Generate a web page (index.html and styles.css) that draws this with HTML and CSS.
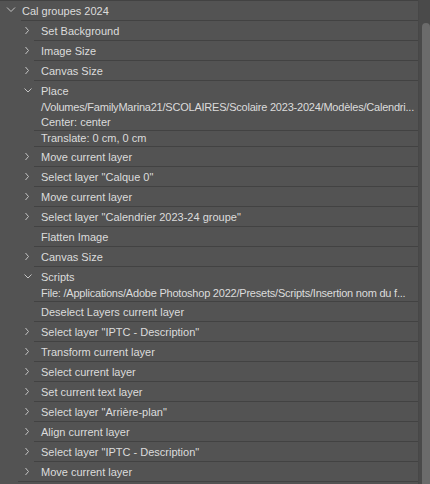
FILE: index.html
```
<!DOCTYPE html>
<html>
<head>
<meta charset="utf-8">
<link rel="stylesheet" href="styles.css">
</head>
<body>
<div class="panel">
  <div class="list">
    <div class="topline"></div>
    <div class="set">
      <div class="row head">
        <div class="gutter g-head"><svg width="21" height="19" viewBox="0 0 21 19"><path d="M7 6.5 L11 10.5 L15 6.5" /></svg></div>
        <div class="body"><div class="line title">Cal groupes 2024</div></div>
      </div>
      <div class="children">
        <div class="row"><div class="gutter"><svg width="16" height="19" viewBox="0 0 16 19"><path d="M7.5 6 L10.5 9.5 L7.5 13" /></svg></div><div class="body"><div class="line title">Set Background</div></div></div>
        <div class="row"><div class="gutter"><svg width="16" height="19" viewBox="0 0 16 19"><path d="M7.5 6 L10.5 9.5 L7.5 13" /></svg></div><div class="body"><div class="line title">Image Size</div></div></div>
        <div class="row"><div class="gutter"><svg width="16" height="19" viewBox="0 0 16 19"><path d="M7.5 6 L10.5 9.5 L7.5 13" /></svg></div><div class="body"><div class="line title">Canvas Size</div></div></div>
        <div class="row"><div class="gutter"><svg width="16" height="19" viewBox="0 0 16 19"><path d="M6.5 7.5 L10 11 L13.5 7.5" /></svg></div><div class="body">
          <div class="line title">Place</div>
          <div class="line detail tight">/Volumes/FamilyMarina21/SCOLAIRES/Scolaire 2023-2024/Modèles/Calendri...</div>
          <div class="line detail">Center: center</div>
        </div></div>
        <div class="row"><div class="gutter short"></div><div class="body"><div class="line detail">Translate: 0 cm, 0 cm</div></div></div>
        <div class="row"><div class="gutter"><svg width="16" height="19" viewBox="0 0 16 19"><path d="M7.5 6 L10.5 9.5 L7.5 13" /></svg></div><div class="body"><div class="line title">Move current layer</div></div></div>
        <div class="row"><div class="gutter"><svg width="16" height="19" viewBox="0 0 16 19"><path d="M7.5 6 L10.5 9.5 L7.5 13" /></svg></div><div class="body"><div class="line title">Select layer "Calque 0"</div></div></div>
        <div class="row"><div class="gutter"><svg width="16" height="19" viewBox="0 0 16 19"><path d="M7.5 6 L10.5 9.5 L7.5 13" /></svg></div><div class="body"><div class="line title">Move current layer</div></div></div>
        <div class="row"><div class="gutter"><svg width="16" height="19" viewBox="0 0 16 19"><path d="M7.5 6 L10.5 9.5 L7.5 13" /></svg></div><div class="body"><div class="line title">Select layer "Calendrier 2023-24 groupe"</div></div></div>
        <div class="row"><div class="gutter"></div><div class="body"><div class="line title">Flatten Image</div></div></div>
        <div class="row"><div class="gutter"><svg width="16" height="19" viewBox="0 0 16 19"><path d="M7.5 6 L10.5 9.5 L7.5 13" /></svg></div><div class="body"><div class="line title">Canvas Size</div></div></div>
        <div class="row"><div class="gutter"><svg width="16" height="19" viewBox="0 0 16 19"><path d="M6.5 7.5 L10 11 L13.5 7.5" /></svg></div><div class="body">
          <div class="line title">Scripts</div>
          <div class="line detail tight">File: /Applications/Adobe Photoshop 2022/Presets/Scripts/Insertion nom du f...</div>
        </div></div>
        <div class="row"><div class="gutter"></div><div class="body"><div class="line title">Deselect Layers current layer</div></div></div>
        <div class="row"><div class="gutter"><svg width="16" height="19" viewBox="0 0 16 19"><path d="M7.5 6 L10.5 9.5 L7.5 13" /></svg></div><div class="body"><div class="line title">Select layer "IPTC - Description"</div></div></div>
        <div class="row"><div class="gutter"><svg width="16" height="19" viewBox="0 0 16 19"><path d="M7.5 6 L10.5 9.5 L7.5 13" /></svg></div><div class="body"><div class="line title">Transform current layer</div></div></div>
        <div class="row"><div class="gutter"><svg width="16" height="19" viewBox="0 0 16 19"><path d="M7.5 6 L10.5 9.5 L7.5 13" /></svg></div><div class="body"><div class="line title">Select current layer</div></div></div>
        <div class="row"><div class="gutter"><svg width="16" height="19" viewBox="0 0 16 19"><path d="M7.5 6 L10.5 9.5 L7.5 13" /></svg></div><div class="body"><div class="line title">Set current text layer</div></div></div>
        <div class="row"><div class="gutter"><svg width="16" height="19" viewBox="0 0 16 19"><path d="M7.5 6 L10.5 9.5 L7.5 13" /></svg></div><div class="body"><div class="line title">Select layer "Arrière-plan"</div></div></div>
        <div class="row"><div class="gutter"><svg width="16" height="19" viewBox="0 0 16 19"><path d="M7.5 6 L10.5 9.5 L7.5 13" /></svg></div><div class="body"><div class="line title">Align current layer</div></div></div>
        <div class="row"><div class="gutter"><svg width="16" height="19" viewBox="0 0 16 19"><path d="M7.5 6 L10.5 9.5 L7.5 13" /></svg></div><div class="body"><div class="line title">Select layer "IPTC - Description"</div></div></div>
        <div class="row"><div class="gutter"><svg width="16" height="19" viewBox="0 0 16 19"><path d="M7.5 6 L10.5 9.5 L7.5 13" /></svg></div><div class="body"><div class="line title">Move current layer</div></div></div>
      </div>
    </div>
  </div>
  <div class="track"><div class="thumb"></div></div>
</div>
</body>
</html>
```
FILE: styles.css
```
html, body {
  margin: 0;
  padding: 0;
  background: #535353;
  height: 100%;
  overflow: hidden;
}

.panel {
  display: flex;
  height: 484px;
  font-family: "Liberation Sans", Arial, sans-serif;
  font-size: 11px;
  color: #dcdcdc;
}

.list {
  width: 418px;
  border-right: 1px solid #474747;
  flex: none;
}

.topline {
  height: 1px;
  background: #424242;
}

.row {
  display: flex;
}

.gutter {
  width: 16px;
  flex: none;
  display: flex;
  align-items: flex-start;
}

.g-head {
  width: 21px;
}

.gutter svg path {
  fill: none;
  stroke: #c4c4c4;
  stroke-width: 1;
}

.body {
  flex: 1;
  min-width: 0;
  border-bottom: 1px solid #424242;
  padding-left: 7px;
}

.head .body {
  padding-left: 1px;
}

.line {
  white-space: nowrap;
}

.title {
  height: 19px;
  line-height: 20px;
}

.detail {
  height: 15px;
  line-height: 15px;
}

.tight {
  letter-spacing: -0.22px;
}

.children {
  margin-left: 18px;
  border-bottom: 1px solid #424242;
}

.children .row:last-child .body {
  border-bottom: none;
}

.track {
  flex: 1;
  background: #4a4a4a;
  padding-top: 23px;
  padding-left: 3px;
  display: flex;
}

.thumb {
  flex: 1;
  background: #6b6b6b;
  border-radius: 4px 4px 0 0;
}
```
